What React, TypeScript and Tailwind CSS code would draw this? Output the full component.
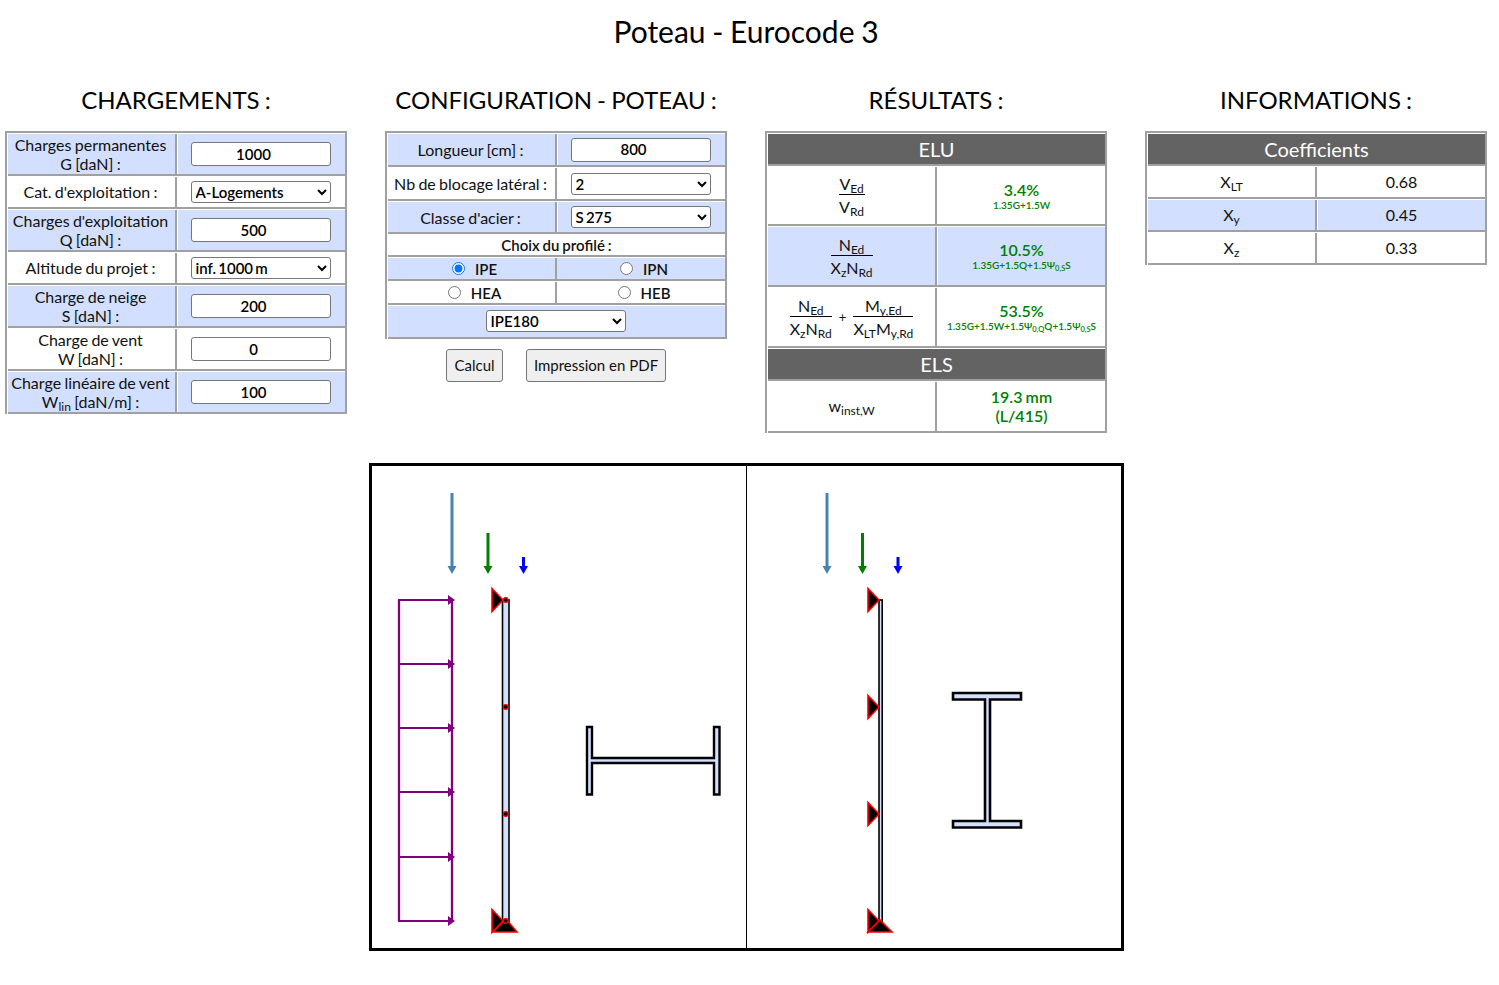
const Cell = ({ className = "", children }: { className?: string; children: React.ReactNode }) => (
  <div className={`flex flex-col items-center justify-center text-center leading-[19px] ${className}`}>
    {children}
  </div>
);

const Row = ({ h, blue, left, right }: { h: string; blue?: boolean; left: React.ReactNode; right: React.ReactNode }) => (
  <div className={`flex border-b-2 border-[#a0a0a0] ${h}`}>
    <Cell className={`w-[169px] border-r-2 border-[#a0a0a0] pr-[2px] ${blue ? "bg-[#d2dffe]" : "bg-white"}`}>{left}</Cell>
    <Cell className={`ml-px flex-1 pr-[2px] ${blue ? "bg-[#d2dffe]" : "bg-white"}`}>{right}</Cell>
  </div>
);

const Full = ({ h, className, children }: { h: string; className: string; children: React.ReactNode }) => (
  <div className={`flex items-center justify-center border-b-2 border-[#a0a0a0] ${h} ${className}`}>{children}</div>
);

const Table = ({ children }: { children: React.ReactNode }) => (
  <div className="flex flex-col gap-px border-x-2 border-t-2 border-[#a0a0a0] bg-white pl-px pt-px">{children}</div>
);

const Header = ({ h, children }: { h: string; children: React.ReactNode }) => (
  <Full h={h} className="bg-[#636363] text-[20px] text-white">{children}</Full>
);

const Heading = ({ children }: { children: React.ReactNode }) => (
  <h2 className="flex h-[67px] items-center justify-center pt-[5px] text-[24px] text-black [word-spacing:-1px]">
    {children}
  </h2>
);

// le texte des champs est décalé à gauche, comme un input number avec flèches masquées
const Field = ({ value }: { value: string }) => (
  <input
    readOnly
    value={value}
    className="h-[24px] w-[140px] rounded-[3px] border border-[#767676] bg-white pr-[14px] pb-[1px] text-center text-[15px] font-semibold text-black"
  />
);

const Pick = ({ value }: { value: string }) => (
  <select
    defaultValue={value}
    className="h-[22px] w-[140px] rounded-[3px] border border-[#767676] bg-white text-[15px] font-semibold text-black [word-spacing:-1.5px]"
  >
    <option>{value}</option>
  </select>
);

const Radio = ({ label, checked }: { label: string; checked?: boolean }) => (
  <label className="ml-[6px] flex items-center gap-[10px] text-[15px] font-semibold">
    <input type="radio" name="profil" defaultChecked={checked} className="h-[13px] w-[13px]" />
    <span className="pt-[2px]">{label}</span>
  </label>
);

const Frac = ({ top, bottom, w }: { top: React.ReactNode; bottom: React.ReactNode; w: string }) => (
  <div className={`flex flex-col items-center ${w}`}>
    <div className="h-[21px] w-full border-b border-black leading-[20px]">{top}</div>
    <div className="pt-[2px] leading-[20px]">{bottom}</div>
  </div>
);

const Result = ({ value, detail }: { value: string; detail: React.ReactNode }) => (
  <div className="ml-[2px] flex flex-col items-center font-semibold text-[#008000]">
    <span className="mb-[1px] text-[16px] leading-[18px]">{value}</span>
    <span className="text-[10px] leading-[11px]">{detail}</span>
  </div>
);

const Arrow = ({ x, y, color }: { x: number; y: number; color: string }) => (
  <g>
    <line x1={x} y1={y} x2={x} y2={568} stroke={color} strokeWidth={3} />
    <path d={`M${x - 4.5} 566 H${x + 4.5} L${x} 574 Z`} fill={color} />
  </g>
);

const Support = ({ x, y }: { x: number; y: number }) => (
  <path d={`M${x} ${y - 11.5} L${x + 11} ${y} L${x} ${y + 11.5} Z`} fill="#000" stroke="#f00" strokeWidth={1.6} />
);

const Column = ({ x, w }: { x: number; w: number }) => (
  <rect x={x} y={600} width={w} height={322} fill="#d2dffe" stroke="#000" strokeWidth={1.6} />
);

const Diagram = () => (
  <div className="flex h-[488px] w-[755px] border-[3px] border-black bg-white">
    <svg viewBox="372 466 374 482" className="h-[482px] w-[375px] border-r border-black">
      <Arrow x={452} y={493} color="#4682b4" />
      <Arrow x={488} y={533} color="#008000" />
      <Arrow x={523.5} y={557} color="#0000ff" />
      <path d="M399 600 V921 M452 600 V921" stroke="#800080" strokeWidth={2.3} fill="none" />
      {[600, 664, 728, 792, 857, 921].map((y) => (
        <g key={y}>
          <line x1={398} y1={y} x2={450} y2={y} stroke="#800080" strokeWidth={2.2} />
          <path d={`M448 ${y - 5} L455 ${y} L448 ${y + 5} Z`} fill="#800080" />
        </g>
      ))}
      <Column x={502.5} w={6.5} />
      <Support x={492} y={600} />
      <Support x={492} y={921} />
      <path d="M506 919 L517 932 H493 Z" fill="#000" stroke="#f00" strokeWidth={1.6} />
      {[600, 707, 814, 921].map((y) => (
        <circle key={y} cx={505.7} cy={y} r={2.4} fill="#000" stroke="#f00" strokeWidth={1.2} />
      ))}
      <path
        d="M587 727 H592 V758 H714 V727 H719.5 V794.5 H714 V763 H592 V794.5 H587 Z"
        fill="#d2dffe"
        stroke="#000"
        strokeWidth={2.4}
      />
    </svg>
    <svg viewBox="747 466 374 482" className="h-[482px] w-[374px]">
      <Arrow x={827} y={493} color="#4682b4" />
      <Arrow x={862.5} y={533} color="#008000" />
      <Arrow x={898} y={557} color="#0000ff" />
      <Column x={879} w={3.2} />
      {[600, 707, 814, 921].map((y) => (
        <Support key={y} x={868} y={y} />
      ))}
      <path d="M880 920 L892 932 H868 Z" fill="#000" stroke="#f00" strokeWidth={1.6} />
      <path
        d="M953 693 H1021 V699.5 H990 V821 H1021 V827.5 H953 V821 H985 V699.5 H953 Z"
        fill="#d2dffe"
        stroke="#000"
        strokeWidth={2.6}
      />
    </svg>
  </div>
);

export default function App() {
  return (
    <div className="w-[1492px] bg-white font-['Lato',sans-serif] text-[16px] text-[#111] [word-spacing:-0.8px]">
      <h1 className="flex h-[64px] items-center justify-center pb-[2px] text-[30px] text-black [word-spacing:-1px]">
        Poteau - Eurocode 3
      </h1>

      <div className="flex items-start gap-[38px] pl-[5px]">
        <section className="w-[342px]">
          <Heading>CHARGEMENTS :</Heading>
          <Table>
            <Row h="h-[42px]" blue left={<>Charges permanentes<span>G [daN] :</span></>} right={<Field value="1000" />} />
            <Row h="h-[32px]" left={<span className="pb-[2px]">Cat. d'exploitation :</span>} right={<Pick value="A-Logements" />} />
            <Row h="h-[42px]" blue left={<>Charges d'exploitation<span>Q [daN] :</span></>} right={<Field value="500" />} />
            <Row h="h-[32px]" left={<span className="pb-[2px]">Altitude du projet :</span>} right={<Pick value="inf. 1000 m" />} />
            <Row h="h-[42px]" blue left={<>Charge de neige<span>S [daN] :</span></>} right={<Field value="200" />} />
            <Row h="h-[42px]" left={<>Charge de vent<span>W [daN] :</span></>} right={<Field value="0" />} />
            <Row h="h-[42px]" blue left={<>Charge linéaire de vent<span>W<sub>lin</sub> [daN/m] :</span></>} right={<Field value="100" />} />
          </Table>
        </section>

        <section className="w-[342px]">
          <Heading>CONFIGURATION - POTEAU :</Heading>
          <Table>
            <Row h="h-[33px]" blue left="Longueur [cm] :" right={<Field value="800" />} />
            <Row h="h-[33px]" left="Nb de blocage latéral :" right={<Pick value="2" />} />
            <Row h="h-[32px]" blue left="Classe d'acier :" right={<Pick value="S 275" />} />
            <Full h="h-[22px]" className="bg-white text-[15px] font-semibold">Choix du profilé :</Full>
            <div className="flex h-[23px] border-b-2 border-[#a0a0a0] bg-[#d2dffe]">
              <Cell className="w-[169px] border-r-2 border-[#a0a0a0]"><Radio label="IPE" checked /></Cell>
              <Cell className="flex-1"><Radio label="IPN" /></Cell>
            </div>
            <div className="flex h-[23px] border-b-2 border-[#a0a0a0] bg-white">
              <Cell className="w-[169px] border-r-2 border-[#a0a0a0]"><Radio label="HEA" /></Cell>
              <Cell className="flex-1"><Radio label="HEB" /></Cell>
            </div>
            <Full h="h-[33px]" className="bg-[#d2dffe] pr-[2px] pb-[2px]"><Pick value="IPE180" /></Full>
          </Table>
          <div className="mt-[10px] flex justify-center gap-[23px] text-[15px]">
            <button className="h-[33px] w-[57px] rounded-[3px] border border-[#767676] bg-[#efefef]">Calcul</button>
            <button className="h-[33px] w-[140px] rounded-[3px] border border-[#767676] bg-[#efefef]">Impression en PDF</button>
          </div>
        </section>

        <section className="w-[342px]">
          <Heading>RÉSULTATS :</Heading>
          <Table>
            <Header h="h-[32px]">ELU</Header>
            <Row
              h="h-[59px]"
              left={<div className="ml-[2px]"><Frac w="w-[26px]" top={<>V<sub>Ed</sub></>} bottom={<>V<sub>Rd</sub></>} /></div>}
              right={<Result value="3.4%" detail="1.35G+1.5W" />}
            />
            <Row
              h="h-[60px]"
              blue
              left={<div className="ml-[2px]"><Frac w="w-[42px]" top={<>N<sub>Ed</sub></>} bottom={<>X<sub>z</sub>N<sub>Rd</sub></>} /></div>}
              right={<Result value="10.5%" detail={<>1.35G+1.5Q+1.5Ψ<sub>0,S</sub>S</>} />}
            />
            <Row
              h="h-[60px]"
              left={
                <div className="ml-[2px] flex items-center gap-[7px]">
                  <Frac w="w-[42px]" top={<>N<sub>Ed</sub></>} bottom={<>X<sub>z</sub>N<sub>Rd</sub></>} />
                  <span className="text-[13px]">+</span>
                  <Frac w="w-[60px]" top={<>M<sub>y,Ed</sub></>} bottom={<>X<sub>LT</sub>M<sub>y,Rd</sub></>} />
                </div>
              }
              right={<Result value="53.5%" detail={<>1.35G+1.5W+1.5Ψ<sub>0,Q</sub>Q+1.5Ψ<sub>0,S</sub>S</>} />}
            />
            <Header h="h-[32px]">ELS</Header>
            <Row
              h="h-[51px]"
              left={<span className="ml-[2px] pb-[2px]">w<sub>inst,W</sub></span>}
              right={<span className="ml-[2px] pb-[2px] text-[16px] leading-[19px] font-semibold text-[#008000]">19.3 mm<br />(L/415)</span>}
            />
          </Table>
        </section>

        <section className="w-[342px]">
          <Heading>INFORMATIONS :</Heading>
          <Table>
            <Header h="h-[32px]">Coefficients</Header>
            <Row h="h-[32px]" left={<span className="ml-[2px] pb-[2px]">X<sub>LT</sub></span>} right={<span className="ml-[2px] pb-[2px]">0.68</span>} />
            <Row h="h-[32px]" blue left={<span className="ml-[2px] pb-[2px]">X<sub>y</sub></span>} right={<span className="ml-[2px] pb-[2px]">0.45</span>} />
            <Row h="h-[32px]" left={<span className="ml-[2px] pb-[2px]">X<sub>z</sub></span>} right={<span className="ml-[2px] pb-[2px]">0.33</span>} />
          </Table>
        </section>
      </div>

      <div className="mt-[30px] flex justify-center pb-[34px]">
        <Diagram />
      </div>
    </div>
  );
}
